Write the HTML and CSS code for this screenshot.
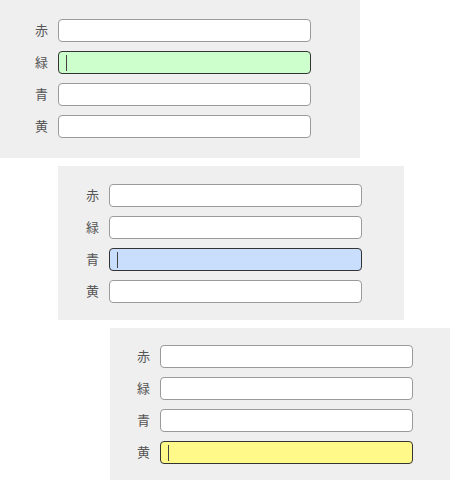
FILE: index.html
```html
<!DOCTYPE html>
<html lang="ja">
<head>
<meta charset="utf-8">
<link rel="stylesheet" href="styles.css">
</head>
<body>
  <div class="panel panel-one">
    <div class="row"><span class="label">赤</span><input class="field" type="text"></div>
    <div class="row"><span class="label">緑</span><input class="field active green" type="text"></div>
    <div class="row"><span class="label">青</span><input class="field" type="text"></div>
    <div class="row"><span class="label">黄</span><input class="field" type="text"></div>
  </div>
  <div class="panel panel-two">
    <div class="row"><span class="label">赤</span><input class="field" type="text"></div>
    <div class="row"><span class="label">緑</span><input class="field" type="text"></div>
    <div class="row"><span class="label">青</span><input class="field active blue" type="text"></div>
    <div class="row"><span class="label">黄</span><input class="field" type="text"></div>
  </div>
  <div class="panel panel-three">
    <div class="row"><span class="label">赤</span><input class="field" type="text"></div>
    <div class="row"><span class="label">緑</span><input class="field" type="text"></div>
    <div class="row"><span class="label">青</span><input class="field" type="text"></div>
    <div class="row"><span class="label">黄</span><input class="field active yellow" type="text"></div>
  </div>
</body>
</html>
```

FILE: styles.css
```css
html, body {
  margin: 0;
  padding: 0;
  background: #ffffff;
  overflow: hidden;
}

body {
  font-family: "Noto Sans CJK JP", "Noto Sans", sans-serif;
}

.panel {
  background: #efefef;
  display: flex;
  flex-direction: column;
  gap: 9px;
  margin-bottom: 8px;
  box-sizing: border-box;
}

.panel-one {
  width: 360px;
  padding: 19px 49px 20px 0;
  --label-w: 48px;
}

.panel-two {
  width: 346px;
  margin-left: 58px;
  padding: 18px 42px 17px 0;
  --label-w: 41px;
}

.panel-three {
  width: 340px;
  margin-left: 110px;
  padding: 17px 37px 17px 0;
  --label-w: 40px;
}

.row {
  display: flex;
  align-items: center;
  gap: 10px;
}

.label {
  width: var(--label-w);
  text-align: right;
  font-size: 13px;
  line-height: 20px;
  color: #555555;
  position: relative;
  top: -1px;
}

.field {
  width: 253px;
  height: 23px;
  box-sizing: border-box;
  margin: 0;
  padding: 0 7px;
  border: 1px solid #9a9a9a;
  border-radius: 4px;
  background: #ffffff;
  font-size: 13px;
  outline: none;
}

.field.active {
  border-color: #333333;
  background-image: linear-gradient(#444444, #444444);
  background-repeat: no-repeat;
  background-position: 7px 3px;
  background-size: 1px 16px;
}

.field.green { background-color: #ccffcc; }
.field.blue { background-color: #c9ddfd; }
.field.yellow { background-color: #fff98a; }
```
